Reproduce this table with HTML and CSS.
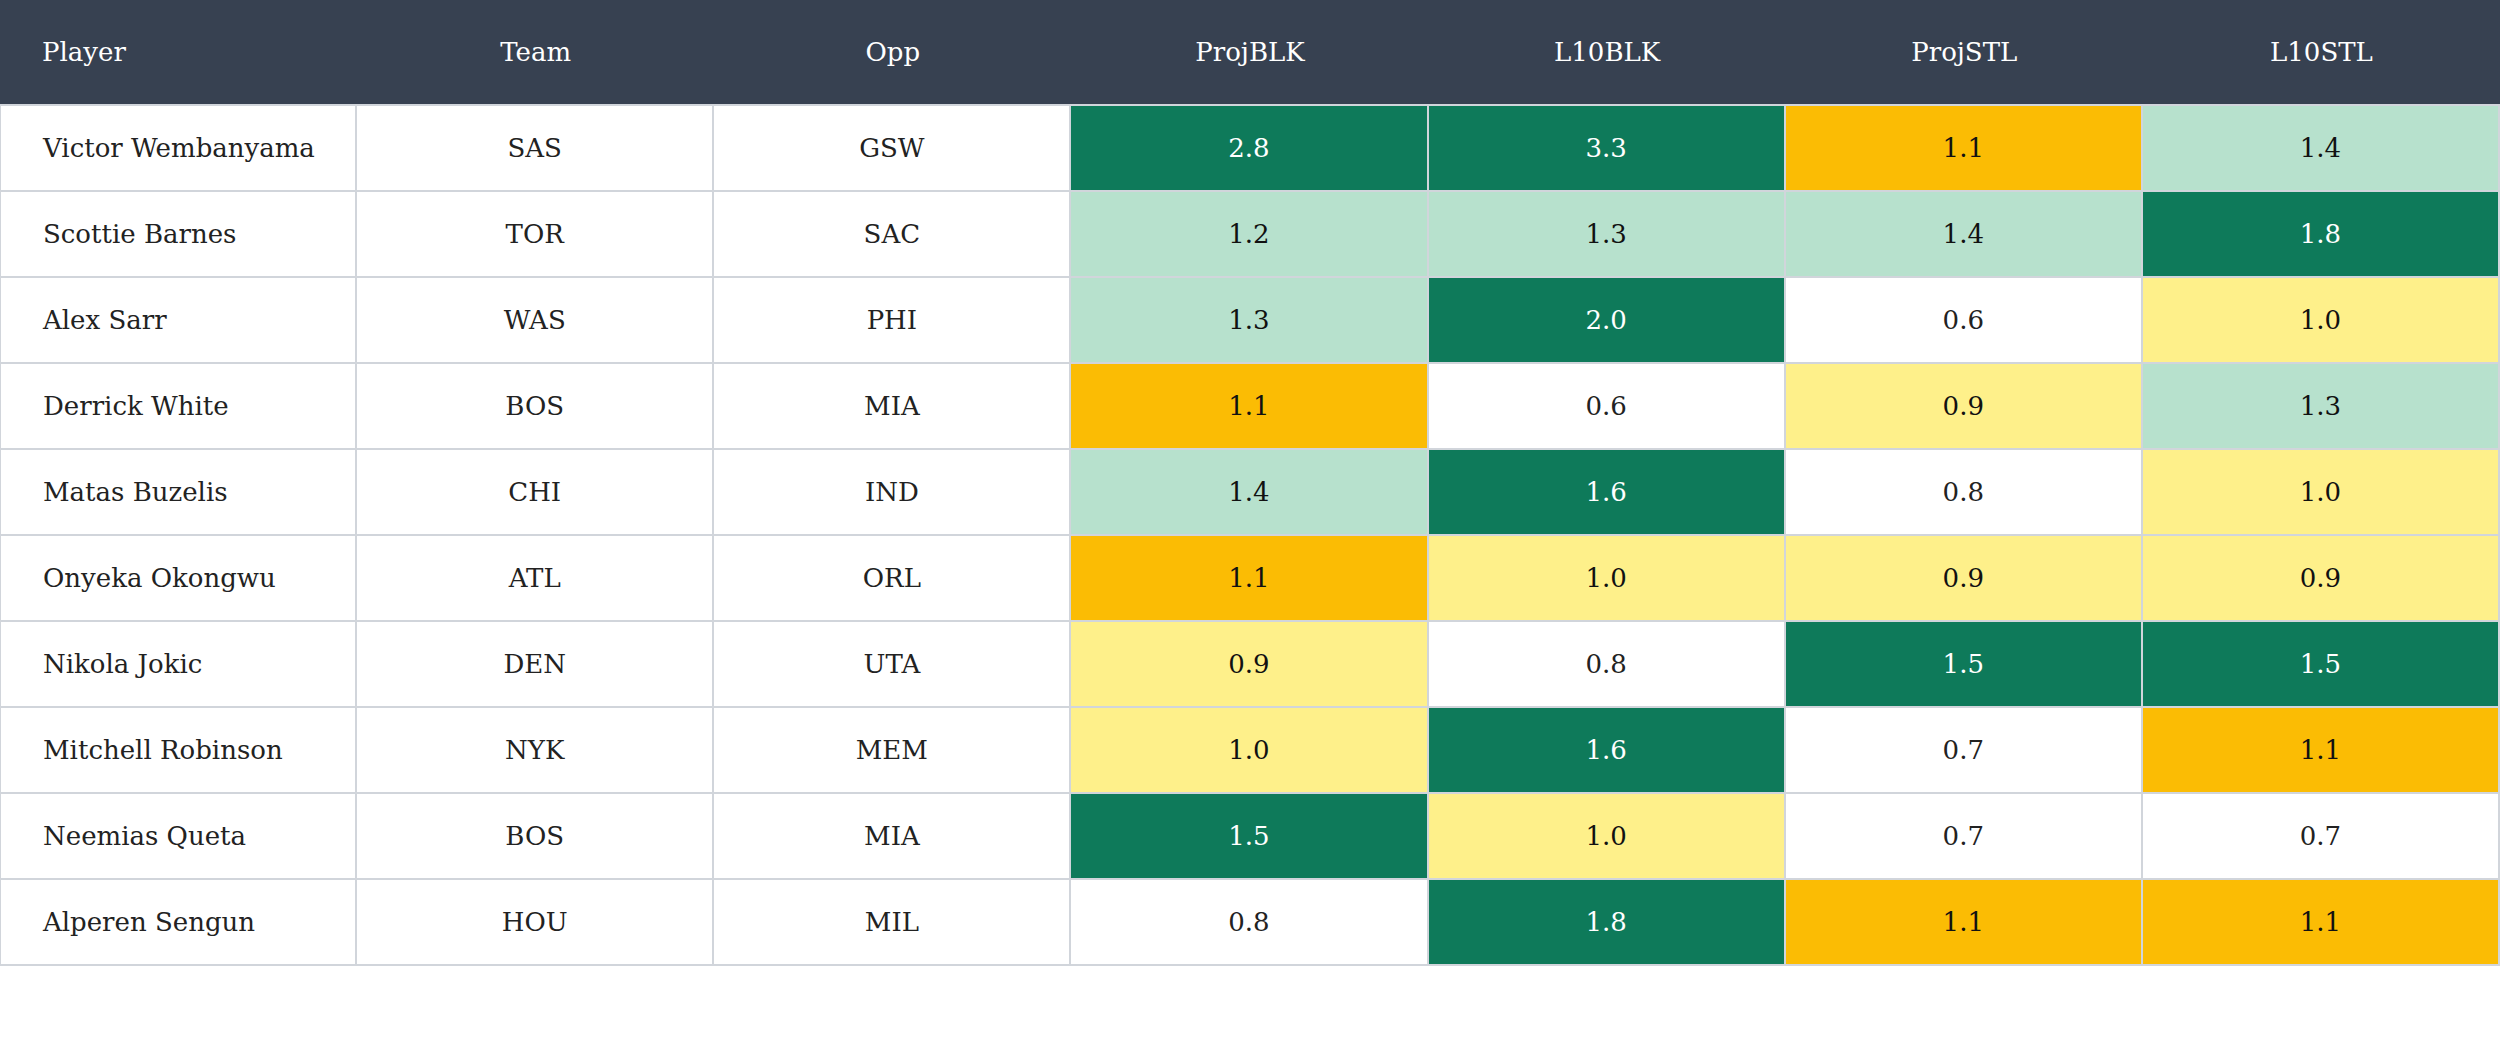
FILE: index.html
```html
<!DOCTYPE html>
<html lang="en">
<head>
<meta charset="utf-8">
<title>Player Projections</title>
<link rel="stylesheet" href="styles.css">
</head>
<body>
<table class="stats">
  <thead>
    <tr>
      <th class="left">Player</th>
      <th>Team</th>
      <th>Opp</th>
      <th>ProjBLK</th>
      <th>L10BLK</th>
      <th>ProjSTL</th>
      <th>L10STL</th>
    </tr>
  </thead>
  <tbody>
    <tr><td class="left">Victor Wembanyama</td><td>SAS</td><td>GSW</td><td class="dg">2.8</td><td class="dg">3.3</td><td class="amb">1.1</td><td class="lg">1.4</td></tr>
    <tr><td class="left">Scottie Barnes</td><td>TOR</td><td>SAC</td><td class="lg">1.2</td><td class="lg">1.3</td><td class="lg">1.4</td><td class="dg">1.8</td></tr>
    <tr><td class="left">Alex Sarr</td><td>WAS</td><td>PHI</td><td class="lg">1.3</td><td class="dg">2.0</td><td>0.6</td><td class="yl">1.0</td></tr>
    <tr><td class="left">Derrick White</td><td>BOS</td><td>MIA</td><td class="amb">1.1</td><td>0.6</td><td class="yl">0.9</td><td class="lg">1.3</td></tr>
    <tr><td class="left">Matas Buzelis</td><td>CHI</td><td>IND</td><td class="lg">1.4</td><td class="dg">1.6</td><td>0.8</td><td class="yl">1.0</td></tr>
    <tr><td class="left">Onyeka Okongwu</td><td>ATL</td><td>ORL</td><td class="amb">1.1</td><td class="yl">1.0</td><td class="yl">0.9</td><td class="yl">0.9</td></tr>
    <tr><td class="left">Nikola Jokic</td><td>DEN</td><td>UTA</td><td class="yl">0.9</td><td>0.8</td><td class="dg">1.5</td><td class="dg">1.5</td></tr>
    <tr><td class="left">Mitchell Robinson</td><td>NYK</td><td>MEM</td><td class="yl">1.0</td><td class="dg">1.6</td><td>0.7</td><td class="amb">1.1</td></tr>
    <tr><td class="left">Neemias Queta</td><td>BOS</td><td>MIA</td><td class="dg">1.5</td><td class="yl">1.0</td><td>0.7</td><td>0.7</td></tr>
    <tr><td class="left">Alperen Sengun</td><td>HOU</td><td>MIL</td><td>0.8</td><td class="dg">1.8</td><td class="amb">1.1</td><td class="amb">1.1</td></tr>
  </tbody>
</table>
</body>
</html>
```

FILE: styles.css
```css
html, body {
  margin: 0;
  padding: 0;
  background: #ffffff;
}

body {
  font-family: "DejaVu Serif", "Liberation Serif", serif;
  font-size: 26px;
  color: #222222;
}

.stats {
  width: 100%;
  table-layout: fixed;
  border-collapse: separate;
  border-spacing: 0;
}

.stats th,
.stats td {
  box-sizing: border-box;
  text-align: center;
  vertical-align: middle;
  font-weight: normal;
  padding: 0 42px;
  white-space: nowrap;
}

.stats th {
  height: 106px;
  background: #374151;
  color: #ffffff;
  border-bottom: 2px solid #d1d5db;
}

.stats td {
  height: 86px;
  border-right: 2px solid #d1d5db;
  border-bottom: 2px solid #d1d5db;
}

.stats td:first-child {
  border-left: 1px solid #d1d5db;
}

.stats .left {
  text-align: left;
}

.stats td.dg {
  background: #0e7a5a;
  color: #ffffff;
}

.stats td.lg {
  background: #b7e1cd;
  color: #111111;
}

.stats td.yl {
  background: #fef08a;
  color: #111111;
}

.stats td.amb {
  background: #fbbc04;
  color: #111111;
}
```
